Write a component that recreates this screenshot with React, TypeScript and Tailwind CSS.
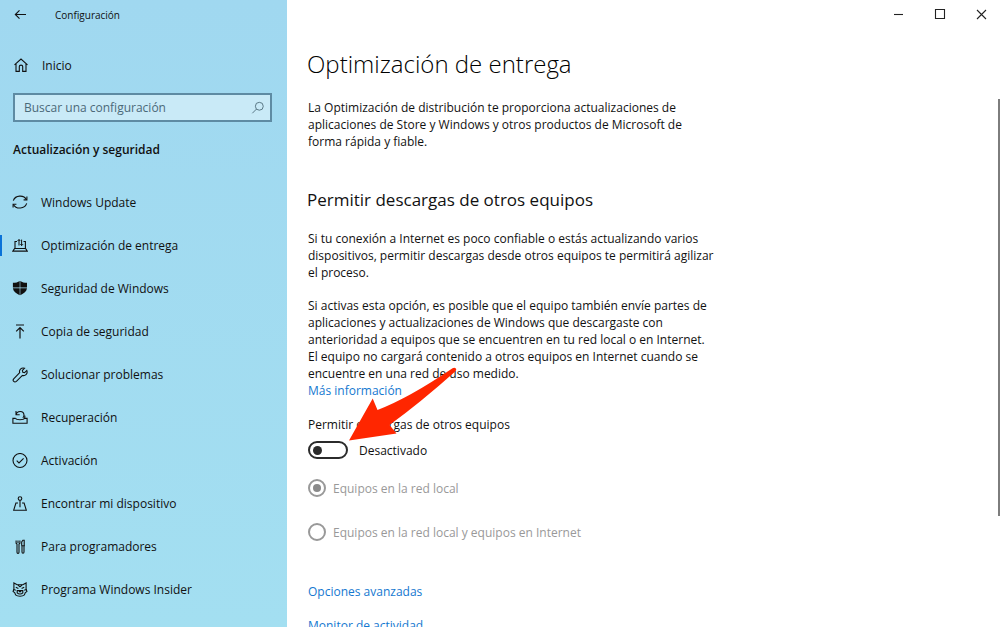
import { useState } from "react";
import type { ReactNode } from "react";

function Icon({ children }: { children: ReactNode }) {
  return (
    <svg
      viewBox="0 0 16 16"
      className="size-4 shrink-0"
      fill="none"
      stroke="currentColor"
      strokeWidth="1.1"
      aria-hidden="true"
    >
      {children}
    </svg>
  );
}

const sections: { label: string; icon: ReactNode }[] = [
  {
    label: "Windows Update",
    icon: (
      <>
        <path d="M1.3 5.6A7.2 6.6 0 0 1 14.6 4.800M14.700 8.400A7.200 6.600 0 0 1 1.400 9.400" />
        <path d="M14.9 1.6v3.3h-3.300M1.100 12.600V9.300h3.300" />
      </>
    ),
  },
  {
    label: "Optimización de entrega",
    icon: (
      <>
        <path d="M5 3.5H3V10.5M11.5 3.5h1.900v7M.9 13.100L2.600 10.500h11l1.700 2.600z" />
        <path d="M7 7.500V1.600M5.600 3L7 1.500 8.200 3M9.600 1.600v6M8.400 6.200l1.200 1.400L11 6.200" strokeWidth="1" />
      </>
    ),
  },
  {
    label: "Seguridad de Windows",
    icon: (
      <path
        fill="currentColor"
        stroke="none"
        d="M7.700 0v6.500H.9V1.800C3.700 1.800 5.900 1.300 7.700 0zM8.300 0v6.500H15V1.800C12.300 1.800 10.100 1.300 8.300 0zM.9 7.200h6.800v7C4 12.400 1.300 10.400.9 7.200zM15 7.200H8.300v7C12 12.400 14.600 10.400 15 7.200z"
      />
    ),
  },
  {
    label: "Copia de seguridad",
    icon: <path d="M4 1h8M8 14.500V3.700M4.200 7.400L8 3.600l3.800 3.800" strokeWidth="1.2" />,
  },
  {
    label: "Solucionar problemas",
    icon: (
      <path d="M12.600 1.200L10.400 3.400l.4 1.800 1.800.4 2.200-2.200c.6 1.700.2 3.300-.8 4.200-1 .9-2.400 1.200-3.600.8l-6 5.900c-1.900 1.700-4.300-.6-2.700-2.500L7.700 5.700c-.5-1.500-.1-2.700.8-3.600 1-1 2.600-1.400 4.100-.9z" />
    ),
  },
  {
    label: "Recuperación",
    icon: (
      <>
        <path d="M3.600 8.400H.9v4.900h14.200V8.400h-2.700M3.600 8.400c.7 1.700 8.100 1.700 8.800 0 .8-1 .6-2 .2-2.800" />
        <path d="M4.200 4.600C5 .4 11.700.5 12 5c0 1.300-.3 2.100-1.200 2.900M4 1v3.700h3.700" />
      </>
    ),
  },
  {
    label: "Activación",
    icon: (
      <>
        <circle cx="8" cy="7.500" r="7" />
        <path d="M4.700 7.700L7 10l4.600-4.700" />
      </>
    ),
  },
  {
    label: "Encontrar mi dispositivo",
    icon: (
      <>
        <circle cx="8" cy="2.600" r="1.800" />
        <path d="M8 4.400v6.800M6 7H3.900L1.700 14.200h12.600L12.100 7H10" />
      </>
    ),
  },
  {
    label: "Para programadores",
    icon: (
      <>
        <path d="M4.100 1.400v2.800l.9.900v8.100c0 1.500 2 1.500 2 0V5.100l.9-.9V1.400M6 1.400v2.700" />
        <path d="M9.700 6.500V3l1.200-1.700h1.300v5.200M9.300 6.700h3.600M10 6.900v6.200c0 1.500 2 1.500 2 0V6.900" />
      </>
    ),
  },
  {
    label: "Programa Windows Insider",
    icon: (
      <>
        <path d="M1.900 1l3.300 1.800h5.600L14.100 1v6l.8 2.600-1.600 1-.9 2.300c-2 1.800-6.800 1.800-8.800 0l-.9-2.300-1.600-1L1.900 7z" />
        <path d="M3.800 5.200l2.600 1.200M12.200 5.200L9.600 6.400M6 3l2 1.800L10 3M5.200 8.600h5.600v2.200c-1.300 1.600-4.300 1.600-5.600 0zM1.700 7.400l2.100.8M14.300 7.400l-2.100.8M6.900 9.600h2.200" />
      </>
    ),
  },
];

const radioClass =
  "grid size-[18px] appearance-none place-items-center rounded-full border-2 border-[#999999] bg-white before:size-2 before:rounded-full before:content-[''] checked:before:bg-[#8a8a8a]";

function Sidebar() {
  return (
    <aside className="flex w-[287px] shrink-0 flex-col bg-linear-to-b from-[#a0d8f0] to-[#a3dff1]">
      <header className="flex h-[30px] items-center gap-[26px] pl-[13px]">
        <button type="button" aria-label="Atrás">
          <Icon>
            <path d="M13 7.500H2.500M6.500 3.300L2.300 7.500l4.200 4.200" />
          </Icon>
        </button>
        <span className="text-[10px]">Configuración</span>
      </header>
      <a href="#inicio" className="mt-[23px] flex h-[26px] items-center gap-[13px] pl-[13px]">
        <Icon>
          <path d="M1.500 6.800L8 1l6.500 5.800M3 5.700v7.700h3.300V8.600c0-2 3.400-2 3.400 0v4.800H13V5.700" />
        </Icon>
        Inicio
      </a>
      <div className="mt-[14px] mr-[15px] ml-[13px] flex h-[29px] items-center border-2 border-[#5e8ba3] bg-[#c9eaf7] pr-[5px] pl-[9px]">
        <input
          type="search"
          aria-label="Buscar una configuración"
          placeholder="Buscar una configuración"
          className="min-w-0 flex-1 bg-transparent outline-none placeholder:text-[#4b6977]"
        />
        <span className="text-[#4b6977]">
          <svg viewBox="0 0 16 16" className="size-[14px]" fill="none" stroke="currentColor" aria-hidden="true">
            <circle cx="9.500" cy="6" r="4.500" />
            <path d="M6.300 9.200L1.500 14" />
          </svg>
        </span>
      </div>
      <h2 className="mt-[18px] pl-[13px] leading-5 font-semibold">Actualización y seguridad</h2>
      <nav className="mt-[21px] flex flex-col">
        {sections.map(({ label, icon }, index) => (
          <a
            key={label}
            href="#seccion"
            aria-current={index === 1 ? "page" : undefined}
            className="group flex h-[43px] items-center"
          >
            <span className="h-[21px] w-[2px] group-aria-[current=page]:bg-[#0a72d8]" />
            <span className="ml-[10px] flex items-center gap-[13px]">
              <Icon>{icon}</Icon>
              {label}
            </span>
          </a>
        ))}
      </nav>
    </aside>
  );
}

function WindowButtons() {
  return (
    <div className="flex h-[28px] justify-end text-[#222222]">
      <button type="button" aria-label="Minimizar" className="grid w-[41px] place-items-center">
        <Icon>
          <path d="M4 8.500h9" />
        </Icon>
      </button>
      <button type="button" aria-label="Maximizar" className="grid w-[41px] place-items-center">
        <Icon>
          <path d="M4.500 3.500h9v9h-9z" />
        </Icon>
      </button>
      <button type="button" aria-label="Cerrar" className="grid w-[41px] place-items-center">
        <Icon>
          <path d="M5 4l9 9M14 4l-9 9" />
        </Icon>
      </button>
    </div>
  );
}

export default function App() {
  const [enabled, setEnabled] = useState(false);
  return (
    <div className="flex h-screen overflow-hidden bg-white font-['Open_Sans','Noto_Sans',sans-serif] text-[12px] text-[#111111]">
      <Sidebar />
      <main className="flex min-w-0 flex-1 flex-col">
        <WindowButtons />
        <div className="flex min-h-0 flex-1">
          <div className="min-w-0 flex-1 overflow-hidden pt-[18px] pl-[21px] leading-[17px]">
            <h1 className="-ml-px text-[24px] leading-9 font-light text-black">Optimización de entrega</h1>
            <p className="mt-[17px] max-w-[408px]">
              La Optimización de distribución te proporciona actualizaciones de aplicaciones de Store y
              Windows y otros productos de Microsoft de forma rápida y fiable.
            </p>
            <h2 className="-ml-px mt-[38px] text-[17px] leading-6">Permitir descargas de otros equipos</h2>
            <p className="mt-[18px] max-w-[408px]">
              Si tu conexión a Internet es poco confiable o estás actualizando varios dispositivos, permitir
              descargas desde otros equipos te permitirá agilizar el proceso.
            </p>
            <p className="mt-4 max-w-[408px]">
              Si activas esta opción, es posible que el equipo también envíe partes de aplicaciones y
              actualizaciones de Windows que descargaste con anterioridad a equipos que se encuentren en tu
              red local o en Internet. El equipo no cargará contenido a otros equipos en Internet cuando se
              encuentre en una red de uso medido.
            </p>
            <a href="#informacion" className="text-[#1478d0]">
              Más información
            </a>
            <div className="relative mt-[17px]">
              <span id="permitir" className="block">
                Permitir descargas de otros equipos
              </span>
              <div className="mt-2 flex items-center gap-[11px]">
                <button
                  type="button"
                  role="switch"
                  aria-checked={enabled}
                  aria-labelledby="permitir"
                  onClick={() => setEnabled(!enabled)}
                  className="flex h-[18px] w-10 items-center rounded-full border-2 border-[#2b2b2b] px-[3px] aria-checked:justify-end"
                >
                  <span className="size-[9px] rounded-full bg-[#2b2b2b]" />
                </button>
                <span>{enabled ? "Activado" : "Desactivado"}</span>
              </div>
              <svg
                viewBox="349 367 108 74"
                className="pointer-events-none absolute -top-[49px] left-[41px] h-[74px] w-[108px]"
                aria-hidden="true"
              >
                <path
                  d="M349 440.500L372.700 398.500 377.500 410Q409 398 452.500 368.300C455 366.500 457.500 369 455.500 371.300Q420 403 389.500 425L396.500 433.500Z"
                  fill="#ff2600"
                />
              </svg>
            </div>
            <fieldset disabled className="mt-5 flex flex-col gap-[26px] text-[#999999]">
              <label className="flex items-center gap-[7px]">
                <input type="radio" name="origen" defaultChecked className={radioClass} />
                Equipos en la red local
              </label>
              <label className="flex items-center gap-[7px]">
                <input type="radio" name="origen" className={radioClass} />
                Equipos en la red local y equipos en Internet
              </label>
            </fieldset>
            <div className="mt-[42px] flex flex-col items-start gap-[17px] text-[#1478d0]">
              <a href="#avanzadas">Opciones avanzadas</a>
              <a href="#monitor">Monitor de actividad</a>
            </div>
          </div>
          <div className="mt-[71px] h-[417px] w-[2px] bg-[#7d7d7d]" />
        </div>
      </main>
    </div>
  );
}
